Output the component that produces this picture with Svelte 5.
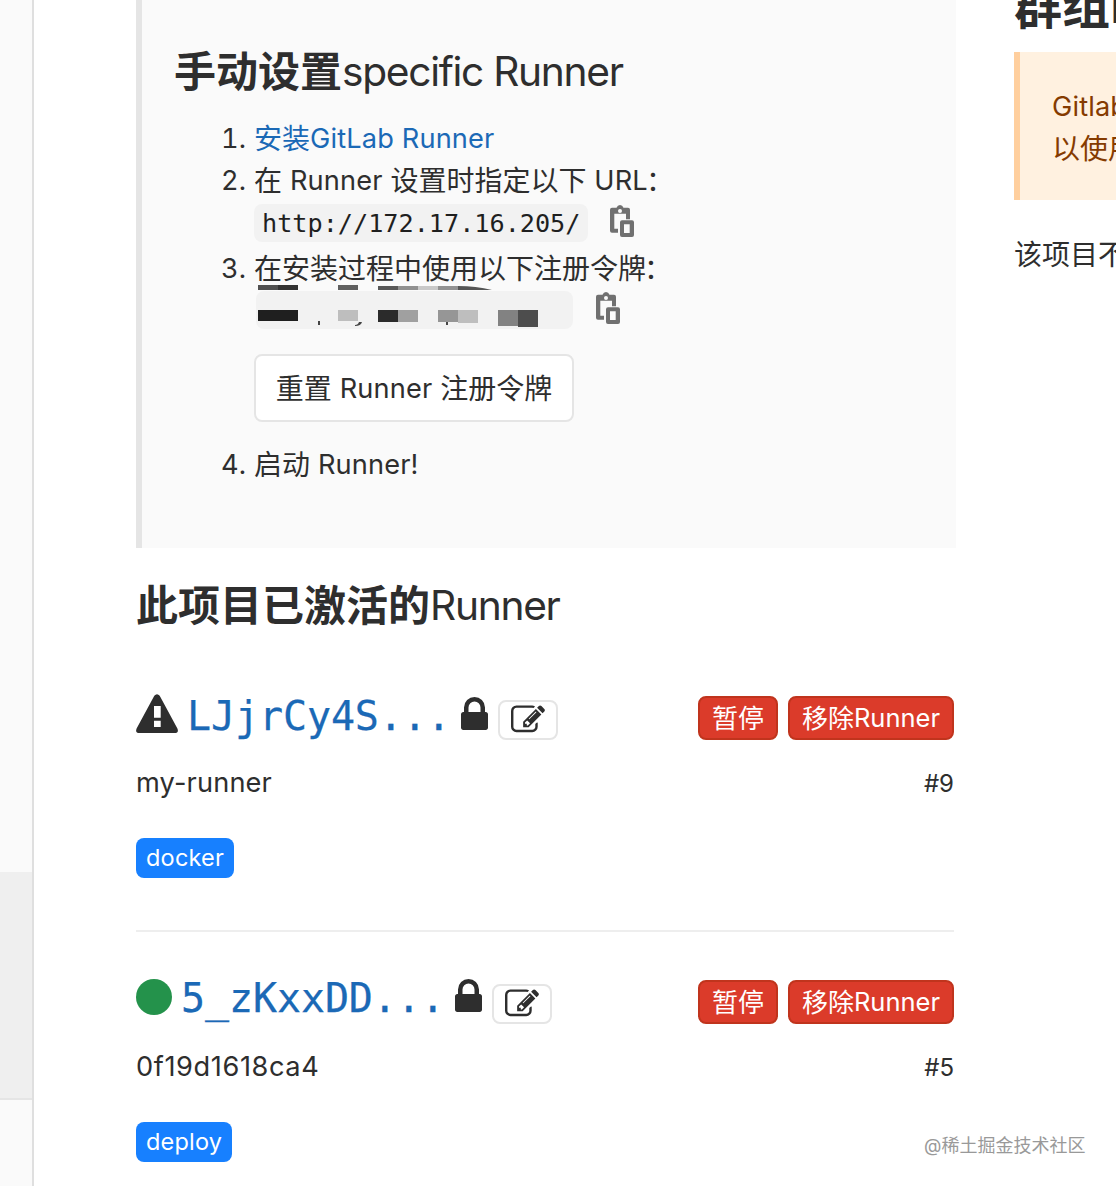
<script>
  const runners = [
    { status: 'warning', token: 'LJjrCy4S...', name: 'my-runner', id: '#9', tag: 'docker' },
    { status: 'online', token: '5_zKxxDD...', name: '0f19d1618ca4', id: '#5', tag: 'deploy' }
  ];
  // Redaction blocks over the registration token: x, y, width, height, fill
  const blocks = [
    [4, 0, 20, 5, '#505050'], [24, 0, 20, 5, '#333'], [84, 0, 20, 5, '#606060'],
    [124, 1, 20, 4, '#585858'], [144, 1, 20, 4, '#909090'], [164, 1, 20, 4, '#c8c8c8'], [184, 1, 20, 4, '#929292'],
    [4, 25, 40, 11, '#1f1f1f'], [84, 25, 20, 11, '#bebebe'],
    [124, 25, 20, 12, '#2b2b2b'], [144, 25, 20, 12, '#a0a0a0'],
    [184, 25, 20, 12, '#969696'], [204, 25, 20, 13, '#bebebe'],
    [244, 25, 20, 16, '#828282'], [264, 25, 20, 17, '#4d4d4d'],
    [64, 36, 2, 4, '#444'], [192, 37, 2, 3, '#444']
  ];
</script>

{#snippet clipboard()}
  <svg class="clip" viewBox="0 0 24 32" aria-hidden="true">
    <path fill="#707070" fill-rule="evenodd" d="M6.500 2.700Q7.500 0 10 0T13.500 2.700H18a2 2 0 0 1 2 2V14.300H16V8.700H4.300V23.700H8V27.700H2a2 2 0 0 1-2-2V4.700a2 2 0 0 1 2-2zM10 4a2 2 0 1 0 0 4 2 2 0 0 0 0-4zM12 15.300H22a2 2 0 0 1 2 2V30a2 2 0 0 1-2 2H12a2 2 0 0 1-2-2V17.300a2 2 0 0 1 2-2zM14 19.300V28h5.700V19.300z" />
  </svg>
{/snippet}

<div class="page">
  <aside class="sidebar"><div class="active"></div></aside>
  <main class="main">
    <section class="setup">
      <h4 class="title setup-title"><b>手动设置</b><span>specific Runner</span></h4>
      <ol class="steps">
        <li class="row"><span class="num">1.</span><a class="link" href="#install">安装<span class="latin">GitLab Runner</span></a></li>
        <li class="row"><span class="num">2.</span><span>在 <span class="latin">Runner</span> 设置时指定以下 <span class="latin">URL</span><span class="colon">：</span></span></li>
        <li class="code-row"><code>http://172.17.16.205/</code>{@render clipboard()}</li>
        <li class="row r3"><span class="num">3.</span><span>在安装过程中使用以下注册令牌<span class="colon">：</span></span></li>
        <li class="token-row">
          <svg class="mosaic" viewBox="0 0 319 46" aria-hidden="true">
            <rect x="2" y="6" width="317" height="38" rx="8" fill="#f2f2f2" />
            {#each blocks as [x, y, w, h, c]}<rect {x} {y} width={w} height={h} fill={c} />{/each}
            <path d="M204 1q18 0 34 4h-34z" fill="#555" /><path d="M101 40q3 0 4-3h3q-1 4-7 4z" fill="#444" />
          </svg>
          {@render clipboard()}
        </li>
        <li class="reset-row"><button class="reset">重置 <span class="latin">Runner</span> 注册令牌</button></li>
        <li class="row"><span class="num">4.</span><span>启动 <span class="latin">Runner!</span></span></li>
      </ol>
    </section>
    <h4 class="title active-title"><b>此项目已激活的</b><span>Runner</span></h4>
    {#each runners as r}
      <section class="runner {r.status}">
        <div class="head">
          {#if r.status === 'warning'}
            <svg class="warn" viewBox="0 0 42 40" aria-hidden="true"><path fill="#2e2e2e" fill-rule="evenodd" d="M18.300 1.700Q21-1.400 23.700 1.700L41.400 34.500Q43.200 39 38.500 39H3.500Q-1.200 39 .6 34.500ZM18 12V23.700h6.700V12ZM18 26.700v6.300h6.700v-6.300Z" /></svg>
          {:else}
            <span class="dot"></span>
          {/if}
          <a class="token" href="#runner">{r.token}</a>
          <svg class="lock" viewBox="320 128 1152 1408" aria-hidden="true"><path fill="#2e2e2e" d="M640 768h512v-192q0-106-75-181t-181-75-181 75-75 181v192zm832 96v576q0 40-28 68t-68 28h-960q-40 0-68-28t-28-68v-576q0-40 28-68t68-28h32v-192q0-184 132-316t316-132 316 132 132 316v192h32q40 0 68 28t28 68z" /></svg>
          <button class="edit" aria-label="编辑">
            <svg viewBox="0 0 1792 1792" aria-hidden="true"><path fill="#2e2e2e" d="M888 1184l116-116-152-152-116 116v56h96v96h56zm440-720q-16-16-33 1l-350 350q-17 17-1 33t33-1l350-350q17-17 1-33zm80 594v190q0 119-84.500 203.500t-203.500 84.500h-832q-119 0-203.500-84.500t-84.500-203.500v-832q0-119 84.500-203.500t203.500-84.500h832q63 0 117 25 15 7 18 23 3 17-9 29l-49 49q-14 14-32 8-23-6-45-6h-832q-66 0-113 47t-47 113v832q0 66 47 113t113 47h832q66 0 113-47t47-113v-126q0-13 9-22l64-64q15-15 35-7t20 29zm-96-738l288 288-672 672h-288v-288zm444 132l-92 92-288-288 92-92q28-28 68-28t68 28l152 152q28 28 28 68t-28 68z" /></svg>
          </button>
          <div class="actions">
            <button class="danger pause">暂停</button>
            <button class="danger remove">移除<span>Runner</span></button>
          </div>
        </div>
        <div class="info"><span class="name">{r.name}</span><small>{r.id}</small></div>
        <span class="tag">{r.tag}</span>
      </section>
    {/each}
  </main>
  <div class="group">
    <h4 class="title group-title"><b>群组</b><span>R</span></h4>
    <div class="notice"><span class="latin">Gitlab</span><br />以使用</div>
    <p>该项目不</p>
  </div>
  <div class="watermark">@稀土掘金技术社区</div>
</div>

<style>
  :global(body) { margin: 0; background: #fff; }
  .page {
    position: relative; display: flex; width: 1116px; height: 1186px; overflow: hidden; box-sizing: border-box;
    font: 28px/42px Inter, "Noto Sans CJK SC", sans-serif; color: #2e2e2e; background: #fff;
  }
  .page * { box-sizing: border-box; }
  a { text-decoration: none; color: #1b69b6; }
  button { font: inherit; color: inherit; margin: 0; white-space: nowrap; }
  .latin { font-size: 27.200px; letter-spacing: 0.150px; line-height: 1; vertical-align: 1px; }
  .colon { margin-left: -2px; }
  .sidebar { flex: none; width: 34px; background: #fafafa; border-right: 2px solid #dfdfdf; padding-top: 872px; }
  .active { height: 228px; background: #efefef; border-bottom: 2px solid #e5e5e5; }
  .main { flex: none; width: 820px; margin-left: 102px; }
  .title { margin: 0; font-size: 42px; line-height: 56px; font-weight: 400; white-space: nowrap; }
  .title span { font-size: 40.700px; letter-spacing: -1.300px; line-height: 1; vertical-align: 1px; }
  b { font-weight: 700; }
  .setup { height: 548px; background: #fafafa; border-left: 6px solid #e5e5e5; padding: 44px 0 0 33px; }
  .setup-title { margin-left: -1px; }
  .steps { list-style: none; margin: 18px 0 0; padding: 0; }
  .row { display: flex; height: 42px; white-space: pre; }
  .num { width: 71px; margin-right: 8px; text-align: right; font-size: 27.200px; font-variant-numeric: tabular-nums; }
  .code-row { display: flex; height: 42px; padding-left: 79px; gap: 22px; align-items: center; }
  code { font: 25.200px/38px "DejaVu Sans Mono", monospace; color: #1f1f1f; background: #f2f2f2; padding: 1px 7.500px 0 8px; border-radius: 8px; height: 38px; }
  .clip { width: 24px; height: 32px; display: block; }
  .code-row .clip { margin-bottom: 5px; }
  .r3 { margin-top: 4px; }
  .token-row { display: flex; height: 46px; padding-left: 79px; gap: 23px; align-items: center; margin-top: -5px; }
  .mosaic { width: 319px; height: 46px; }
  .reset-row { padding: 23px 0 0 79px; height: 113px; }
  .reset { width: 320px; height: 68px; border: 2px solid #e5e5e5; border-radius: 8px; background: #fff; padding: 1px 0 0; }
  .active-title { margin: 30px 0 1px; }
  .runner { height: 254px; width: 818px; padding-top: 38px; }
  .head { display: flex; height: 76px; align-items: flex-start; padding-top: 8px; }
  .warning { border-bottom: 2px solid #eee; height: 297px; padding-top: 51px; }
  .warn { width: 42px; height: 40px; margin-right: 9px; }
  .dot { width: 36px; height: 36px; border-radius: 50%; background: #24924b; margin: 1px 9px 0 0; }
  .token { font: 40px/46px "DejaVu Sans Mono", monospace; margin-top: -1px; letter-spacing: -0.100px; -webkit-text-stroke: 0.250px; }
  .lock { width: 27px; height: 33px; margin: 3px 10px 0 10px; }
  .online .token { margin-top: -3px; }
  .online .lock { margin-top: 1px; }
  .edit { width: 60px; height: 40px; border: 2px solid #e5e5e5; border-radius: 8px; background: #fff; padding: 0; margin-top: 6px; display: flex; align-items: center; justify-content: center; }
  .edit svg { width: 34px; height: 34px; }
  .actions { margin-left: auto; display: flex; gap: 10px; padding-top: 2px; }
  .danger { height: 44px; border: 2px solid #c0341d; border-radius: 8px; background: #db3b2a; color: #fff; font-size: 26px; line-height: 40px; padding: 1px 0 0; }
  .danger span { font-size: 25.500px; line-height: 1; vertical-align: 1px; }
  .pause { width: 80px; }
  .remove { width: 166px; }
  .info { display: flex; justify-content: space-between; }
  .name { font-size: 27.200px; letter-spacing: 0.150px; }
  .online .name { letter-spacing: 0.600px; }
  .info small { font-size: 24px; line-height: 44px; height: 42px; }
  .tag { display: block; width: max-content; height: 40px; margin-top: 34px; padding: 0 10px; border-radius: 8px; background: #1780ff; color: #fff; font-size: 23.500px; letter-spacing: 0.200px; line-height: 40px; }
  .group { flex: none; width: 102px; margin-left: 58px; white-space: nowrap; }
  .group-title { margin-top: -21px; font-size: 48px; }
  .notice { height: 148px; margin-top: 17px; border-left: 6px solid #ffcf9e; background: #fff1e0; color: #853b00; padding: 34px 0 0 32px; }
  .group p { margin: 34px 0 0; }
  .watermark { position: absolute; left: 924px; top: 1132px; font-size: 18px; line-height: 27px; color: #999; white-space: nowrap; }
</style>
